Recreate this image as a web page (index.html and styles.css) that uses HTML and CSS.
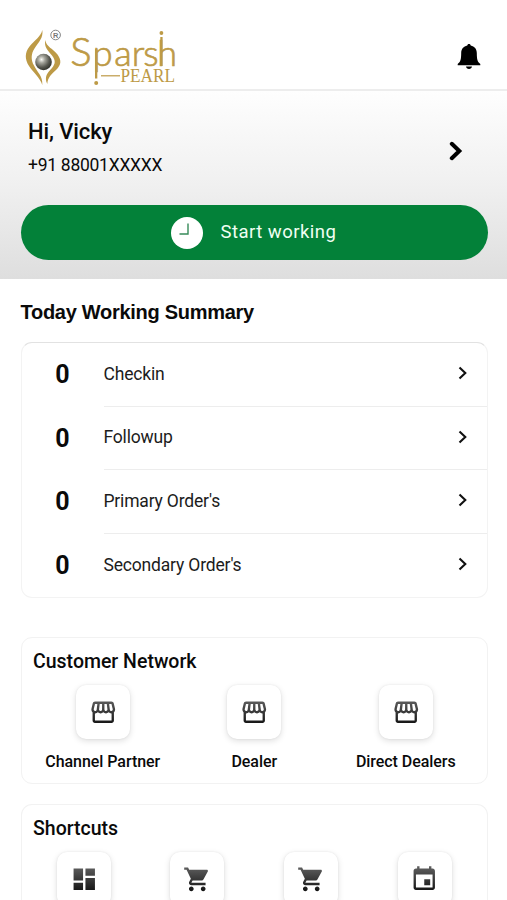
FILE: index.html
```html
<!DOCTYPE html>
<html lang="en">
<head>
<meta charset="utf-8">
<title>Sparsh Pearl</title>
<link rel="stylesheet" href="styles.css">
</head>
<body>
<svg class="defs" width="0" height="0" aria-hidden="true">
  <defs>
    <linearGradient id="ink" x1="0" y1="0" x2="0" y2="24" gradientUnits="userSpaceOnUse"><stop offset="0.1" stop-color="#5c5c5c"/><stop offset="1" stop-color="#0c0c0c"/></linearGradient>
    <radialGradient id="pearl" cx="0.38" cy="0.35" r="0.68"><stop offset="0" stop-color="#fafaf5"/><stop offset="0.3" stop-color="#a5a59c"/><stop offset="0.7" stop-color="#55564e"/><stop offset="1" stop-color="#30312b"/></radialGradient>
    <symbol id="store" viewBox="0 0 24 24"><path fill="url(#ink)" d="M21.9 8.89l-1.05-4.37c-.22-.9-1-1.52-1.91-1.52H5.05c-.9 0-1.69.63-1.9 1.52L2.1 8.89c-.24 1.02-.02 2.06.62 2.88.08.11.19.19.28.29V19c0 1.1.9 2 2 2h14c1.100 0 2-.9 2-2v-6.940c.09-.09.2-.18.28-.28.64-.82.87-1.870.62-2.890zm-2.990-3.900l1.050 4.370c.1.420.010.840-.250 1.170-.140.180-.440.470-.940.470-.610 0-1.140-.490-1.210-1.140L16.980 5l1.930-.010zM13 5h1.960l.54 4.520c.05.390-.070.780-.330 1.070-.220.260-.540.410-.950.410-.670 0-1.220-.590-1.220-1.310V5zM8.490 9.520L9.040 5H11v4.690c0 .720-.550 1.310-1.290 1.310-.340 0-.650-.150-.890-.410-.250-.290-.370-.680-.330-1.070zm-4.450-.160L5.050 5h1.970l-.58 4.860c-.080.650-.600 1.140-1.210 1.140-.490 0-.800-.290-.930-.470-.270-.320-.360-.750-.260-1.170zM5 19v-6.030c.08.010.150.030.230.030.870 0 1.660-.360 2.240-.950.600.600 1.400.950 2.310.950.870 0 1.650-.360 2.230-.930.590.570 1.390.930 2.290.930.840 0 1.640-.350 2.240-.950.580.590 1.370.950 2.240.950.080 0 .150-.020.230-.030V19H5z"/></symbol>
    <symbol id="board" viewBox="0 0 24 24"><path fill="url(#ink)" d="M3 13h8V3H3v10zm0 8h8v-6H3v6zm10 0h8V11h-8v10zm0-18v6h8V3h-8z"/></symbol>
    <symbol id="cart" viewBox="0 0 24 24"><path fill="url(#ink)" d="M7 18c-1.100 0-1.990.9-1.990 2S5.900 22 7 22s2-.9 2-2-.9-2-2-2zM1 2v2h2l3.600 7.590-1.350 2.450c-.16.280-.25.610-.25.960 0 1.100.9 2 2 2h12v-2H7.420c-.14 0-.25-.11-.25-.25l.03-.12.9-1.630h7.450c.75 0 1.410-.41 1.750-1.030l3.580-6.490c.08-.14.12-.31.12-.48 0-.55-.45-1-1-1H5.210l-.94-2H1zm16 16c-1.100 0-1.990.9-1.990 2s.89 2 1.990 2 2-.9 2-2-.9-2-2-2z"/></symbol>
    <symbol id="event" viewBox="0 0 24 24"><path fill="url(#ink)" d="M17 12h-5v5h5v-5zM16 1v2H8V1H6v2H5c-1.110 0-1.990.9-1.990 2L3 19c0 1.100.89 2 2 2h14c1.100 0 2-.9 2-2V5c0-1.100-.9-2-2-2h-1V1h-2zm3 18H5V8h14v11z"/></symbol>
    <symbol id="chevron" viewBox="0 0 10 14"><path d="M1.500 1.500 7.300 7 1.500 12.500" fill="none" stroke="#111" stroke-width="2.100"/></symbol>
  </defs>
</svg>

<header class="topbar">
  <svg class="logo" viewBox="20 24 160 64" role="img" aria-label="Sparsh Pearl">
    <g fill="#bd9a46">
      <path d="M42.300 30C43.600 38 38.500 42 34.500 48.500C31 53.500 30.800 60 34 65.500C37 72 43 76 42.300 85C40 77.500 34 73.500 29 66C24.500 59 24.800 52.500 29.500 46.500C34.500 40 40.800 37 42.300 30Z"/>
      <path d="M45.300 40C46.300 47 53 48.500 57.500 54.500C61.800 60.500 61.200 65 56 70C51.500 74.500 47.800 77 47.300 84C43.800 77 47.500 72.500 52 68C55.500 63.500 55.800 60.500 52 55.500C48 50.500 43.800 47 45.300 40Z"/>
      <rect x="95" y="49" width="2.300" height="29.500"/><circle cx="96.200" cy="83" r="2"/>
      <rect x="160.300" y="37" width="2.300" height="29"/><circle cx="161.400" cy="33" r="1.900"/>
      <rect x="101" y="75.200" width="19" height="1.200"/>
    </g>
    <circle cx="43.500" cy="62" r="8.300" fill="url(#pearl)"/>
    <circle cx="55.600" cy="35" r="4.800" fill="none" stroke="#777" stroke-width="0.900"/>
    <text class="logo-mark" x="53" y="37.700">R</text>
    <text class="logo-name" x="70.200 92.700 114.300 131.800 143.300 157.300" y="66"><tspan class="logo-initial">S</tspan>parsh</text>
    <text class="logo-sub" x="120.500" y="82" textLength="54.500" lengthAdjust="spacingAndGlyphs">PEARL</text>
  </svg>
  <svg class="bell" viewBox="0 0 24 28"><path d="M12 1c1 0 1.700.6 1.700 1.500C17.500 3.300 19.700 6 19.800 10c.1 6.500.5 8.500 3.500 11v1.200H.7V21c3-2.500 3.400-4.500 3.500-11C4.300 6 6.500 3.300 10.300 2.500 10.300 1.600 11 1 12 1ZM9 23.500h6c-.2 1.600-1.400 2.500-3 2.500s-2.800-.9-3-2.500Z" fill="#000"/></svg>
</header>

<section class="hero">
  <div class="profile">
    <div>
      <h1 class="greeting">Hi, Vicky</h1>
      <p class="phone">+91 88001XXXXX</p>
    </div>
    <svg class="profile-arrow" viewBox="0 0 14 20"><path d="M2.800 2.800 10.300 10 2.800 17.200" fill="none" stroke="#000" stroke-width="4" stroke-linecap="round"/></svg>
  </div>
  <button class="start">
    <svg class="clock" viewBox="0 0 32 32"><circle cx="16" cy="16" r="16" fill="#fff"/><path d="M17 6.500V17H8.500" fill="none" stroke="#378b59" stroke-width="1.400"/></svg>
    <span>Start working</span>
  </button>
</section>

<main>
  <h2 class="summary-title">Today Working Summary</h2>
  <ul class="summary">
    <li><b>0</b><div><span>Checkin</span><svg><use href="#chevron"/></svg></div></li>
    <li><b>0</b><div><span>Followup</span><svg><use href="#chevron"/></svg></div></li>
    <li><b>0</b><div><span>Primary Order's</span><svg><use href="#chevron"/></svg></div></li>
    <li><b>0</b><div><span>Secondary Order's</span><svg><use href="#chevron"/></svg></div></li>
  </ul>

  <section class="panel network">
    <h2>Customer Network</h2>
    <div class="grid three">
      <div class="item"><span class="tile"><svg><use href="#store"/></svg></span><span>Channel Partner</span></div>
      <div class="item"><span class="tile"><svg><use href="#store"/></svg></span><span>Dealer</span></div>
      <div class="item"><span class="tile"><svg><use href="#store"/></svg></span><span>Direct Dealers</span></div>
    </div>
  </section>

  <section class="panel shortcuts">
    <h2>Shortcuts</h2>
    <div class="grid four">
      <div class="item"><span class="tile"><svg><use href="#board"/></svg></span></div>
      <div class="item"><span class="tile"><svg><use href="#cart"/></svg></span></div>
      <div class="item"><span class="tile"><svg><use href="#cart"/></svg></span></div>
      <div class="item"><span class="tile"><svg><use href="#event"/></svg></span></div>
    </div>
  </section>
</main>
</body>
</html>
```
FILE: styles.css
```css
* { box-sizing: border-box; margin: 0; padding: 0; }
body {
  display: flex;
  flex-direction: column;
  height: 900px;
  overflow: hidden;
  background: #fff;
  color: #0a0a0a;
  font-family: Roboto, sans-serif;
}
.defs { display: block; flex: none; height: 0; }
svg { display: block; flex: none; }

.topbar {
  display: flex;
  flex: none;
  justify-content: space-between;
  height: 91px;
  padding: 24px 26px 0 20px;
  border-bottom: 2px solid #ededed;
}
.logo { width: 160px; height: 64px; overflow: visible; }
.logo-name { font: 300 36px Lato, sans-serif; fill: #bd9a46; stroke: #bd9a46; stroke-width: 0.7px; }
.logo-initial { font-size: 40px; }
.logo-sub { font: 18px "Liberation Serif", serif; fill: #bd9a46; }
.logo-mark { font: 700 7.500px "Liberation Sans", sans-serif; fill: #777; }
.bell { width: 24px; height: 28px; margin-top: 19px; }

.hero {
  flex: none;
  height: 188px;
  padding: 0 19.500px 0 20.500px;
  background: linear-gradient(#fefefe, #f0f0f0 50%, #dedede);
}
.profile {
  display: flex;
  justify-content: space-between;
  height: 114px;
  padding: 27px 24.500px 0 7.500px;
}
.greeting { font-size: 22px; font-weight: 500; line-height: 28px; letter-spacing: -0.100px; }
.phone { margin-top: 6.500px; font-size: 17.500px; line-height: 24px; letter-spacing: -0.270px; }
.profile-arrow { width: 14px; height: 20px; margin-top: 23px; }
.start {
  display: flex;
  align-items: center;
  width: 467px;
  height: 55px;
  padding-left: 150px;
  gap: 18px;
  border: 0;
  border-radius: 28px;
  background: #038139;
  color: #f0fff3;
  font: 18.500px Roboto, sans-serif;
  letter-spacing: 0.480px;
}
.start span { margin-top: -2px; }
.clock { width: 32px; height: 32px; }

main { padding: 0 19.500px 0 20.500px; }
.summary-title {
  height: 63px;
  padding-top: 21px;
  font: 700 20px/24px "Liberation Sans", sans-serif;
  letter-spacing: -0.280px;
}
.summary {
  height: 256px;
  border: 1px solid #f3f3f3;
  border-top-color: #e2e2e2;
  border-radius: 11px;
  list-style: none;
}
.summary li { display: flex; height: 63.500px; }
.summary b {
  width: 82px;
  font-size: 25px;
  font-weight: 700;
  line-height: 63px;
  text-align: center;
}
.summary div {
  display: flex;
  flex: 1;
  align-items: center;
  justify-content: space-between;
  padding: 0 18.500px 1px 0;
  border-bottom: 1.500px solid #ededed;
}
.summary li:last-child div { border: 0; }
.summary span { font-size: 17.500px; letter-spacing: -0.180px; color: #1c1c1c; }
.summary svg { width: 10px; height: 14px; margin-top: -1px; }

.panel { border: 1px solid #f2f2f2; border-radius: 11px; }
.panel h2 { padding-left: 11.500px; font-size: 19.500px; font-weight: 500; line-height: 24px; }
.network { height: 147px; margin-top: 39px; padding-top: 12px; }
.shortcuts {
  height: 96px;
  margin-top: 20px;
  padding-top: 12px;
  overflow: hidden;
  border-bottom: 0;
  border-radius: 11px 11px 0 0;
}
.grid { display: grid; margin: 11px 5px 0 5.500px; }
.three { grid-template-columns: repeat(3, 1fr); }
.four { grid-template-columns: repeat(4, 1fr); }
.item {
  display: flex;
  flex-direction: column;
  align-items: center;
  gap: 13px;
  font-size: 16px;
  font-weight: 500;
  line-height: 20px;
  letter-spacing: -0.050px;
  white-space: nowrap;
}
.tile {
  display: grid;
  place-items: center;
  width: 54px;
  height: 54px;
  border-radius: 10px;
  background: #fff;
  box-shadow: 0 2px 6px rgba(0, 0, 0, 0.13), 0 0 2px rgba(0, 0, 0, 0.08);
}
.tile svg { width: 28.500px; height: 28.500px; }
```
